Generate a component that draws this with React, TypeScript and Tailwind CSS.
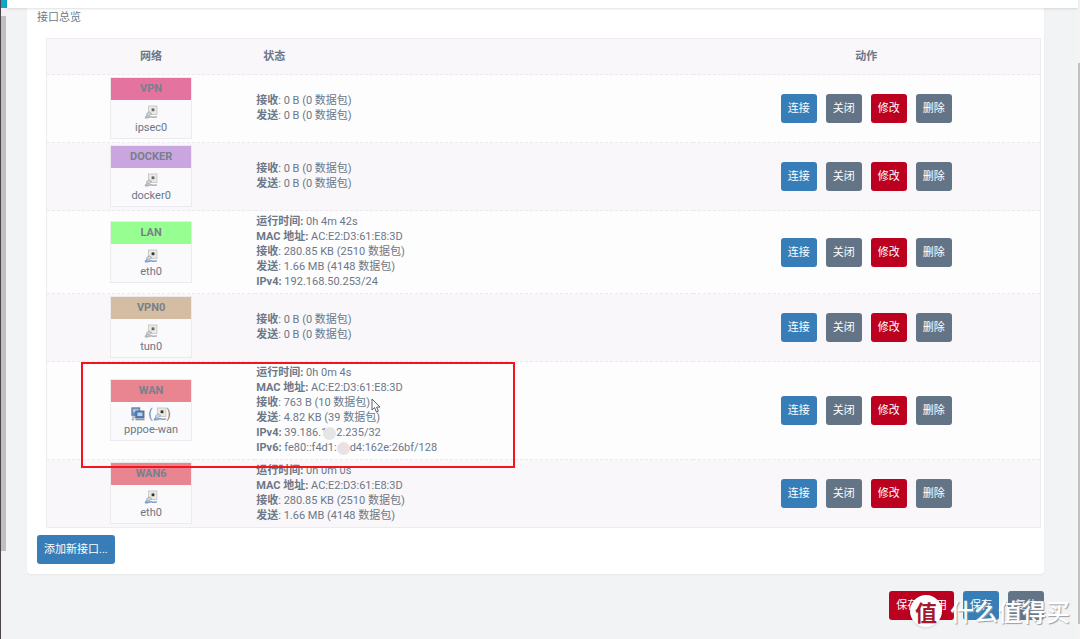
import type { ReactNode } from "react";

type Iface = {
  name: string;
  device: string;
  head: string;
  icon: "off" | "on" | "ppp";
  status: { label: string; plain?: boolean; value: ReactNode }[];
};

const mac = { label: "MAC 地址:", value: "AC:E2:D3:61:E8:3D" };
const traffic = (rx: string, tx: string) => [
  { label: "接收", plain: true, value: rx },
  { label: "发送", plain: true, value: tx },
];

function Blot({ tone }: { tone: string }) {
  return <span className={`relative -my-1 inline-block size-[13px] rounded-full align-middle ${tone}`} />;
}

const interfaces: Iface[] = [
  {
    name: "VPN", device: "ipsec0", head: "bg-[#e4749f]", icon: "off",
    status: traffic("0 B (0 数据包)", "0 B (0 数据包)"),
  },
  {
    name: "DOCKER", device: "docker0", head: "bg-[#c9a6e0]", icon: "off",
    status: traffic("0 B (0 数据包)", "0 B (0 数据包)"),
  },
  {
    name: "LAN", device: "eth0", head: "bg-[#97ff92]", icon: "on",
    status: [
      { label: "运行时间:", value: "0h 4m 42s" },
      mac,
      ...traffic("280.85 KB (2510 数据包)", "1.66 MB (4148 数据包)"),
      { label: "IPv4:", value: "192.168.50.253/24" },
    ],
  },
  {
    name: "VPN0", device: "tun0", head: "bg-[#d4bda2]", icon: "off",
    status: traffic("0 B (0 数据包)", "0 B (0 数据包)"),
  },
  {
    name: "WAN", device: "pppoe-wan", head: "bg-[#e88590]", icon: "ppp",
    status: [
      { label: "运行时间:", value: "0h 0m 4s" },
      mac,
      ...traffic("763 B (10 数据包)", "4.82 KB (39 数据包)"),
      { label: "IPv4:", value: <>39.186.1<span className="-ml-1"><Blot tone="bg-[#e5e5e7]" /></span>2.235/32</> },
      { label: "IPv6:", value: <>fe80::f4d1:<Blot tone="bg-[#ebe0e4]" />d4:162e:26bf/128</> },
    ],
  },
  {
    name: "WAN6", device: "eth0", head: "bg-[#e88590]", icon: "on",
    status: [
      { label: "运行时间:", value: "0h 0m 0s" },
      mac,
      ...traffic("280.85 KB (2510 数据包)", "1.66 MB (4148 数据包)"),
    ],
  },
];

function PortIcon({ active }: { active: boolean }) {
  const cable = active ? "#7f9fd0" : "#b2b2b6";
  return (
    <svg viewBox="0 0 14 14" className="inline-block size-[14px]" aria-hidden="true">
      <rect x="4.5" y="1" width="8.4" height="8.4" fill="#ebebe6" stroke="#c2c2be" strokeWidth="0.8" />
      <rect x="7.6" y="3.4" width="2.8" height="2.8" fill={active ? "#33352f" : "#66666a"} />
      <path d="M2.8 8.4 5.4 6.8 7.8 8.6 5.2 10.8 2.6 10.4Z" fill="#cdd3da" stroke="#9aa0a8" strokeWidth="0.7" />
      <path d="M1 12.8 3 10.8M1 12.7C4.5 13 6 11.2 8 11.9S11 12.2 12.8 11.8" fill="none" stroke={cable} strokeWidth="1.6" />
    </svg>
  );
}

function ComputersIcon() {
  return (
    <svg viewBox="0 0 14 14" className="inline-block size-[14px]" aria-hidden="true">
      <rect x="0.8" y="0.8" width="8" height="7.6" fill="#6e92c8" stroke="#76818f" strokeWidth="0.9" />
      <rect x="2.2" y="2.2" width="5" height="3" fill="#b6d0ee" />
      <path d="M1 9.2h3.4v2.4H1z" fill="#b4bcc6" />
      <rect x="4.8" y="4" width="8.2" height="7" fill="#4f7dbd" stroke="#5e6978" strokeWidth="0.9" />
      <rect x="6.4" y="5.6" width="5" height="3.4" fill="#b9d4f2" />
      <path d="M4.5 12.6h9" stroke="#8d97a4" strokeWidth="1.5" />
      <path d="M0.8 12.6h2" stroke="#6f9be0" strokeWidth="1.4" />
    </svg>
  );
}

const tones = {
  blue: "bg-[#377eb8]",
  slate: "bg-[#637487]",
  red: "bg-[#bc0020]",
};

function Button({ tone, children }: { tone: keyof typeof tones; children: ReactNode }) {
  return (
    <button
      type="button"
      className={`h-[29px] whitespace-nowrap rounded-[3px] px-[7px] pt-px text-[11px] leading-4 text-white ${tones[tone]}`}
    >
      {children}
    </button>
  );
}

function InterfaceRow({ item }: { item: Iface }) {
  return (
    <tr className="border-t border-dashed border-[#ebebee] odd:bg-[#fdfdfe] even:bg-[#f9f7fa]">
      <td className="px-0 pb-[3px] pt-0.5 text-center">
        <div className="mx-auto w-[82px] border border-[#ebeaee] bg-[#faf9fb]">
          <div className={`h-[22px] font-bold leading-[22px] text-[#77808c] ${item.head}`}>{item.name}</div>
          <div className="flex h-[38px] flex-col items-center justify-end pb-[3px]">
            <div className="flex h-4 items-center">
              {item.icon === "ppp" ? (
                <>
                  <ComputersIcon />
                  <span className="ml-[3px] text-[12px]">(</span>
                  <PortIcon active />
                  <span className="text-[12px]">)</span>
                </>
              ) : (
                <PortIcon active={item.icon === "on"} />
              )}
            </div>
            <div>{item.device}</div>
          </div>
        </div>
      </td>
      <td className="px-px pb-1 pt-[3px]">
        {item.status.map((line) => (
          <div key={line.label} className="whitespace-nowrap">
            <strong>{line.label}</strong>
            {line.plain && ":"} {line.value}
          </div>
        ))}
      </td>
      <td className="p-0">
        <div className="flex justify-center gap-[9px]">
          <Button tone="blue">连接</Button>
          <Button tone="slate">关闭</Button>
          <Button tone="red">修改</Button>
          <Button tone="slate">删除</Button>
        </div>
      </td>
    </tr>
  );
}

export default function App() {
  return (
    <div className="relative flex min-h-screen overflow-hidden bg-[#f2f3f5] font-[Roboto,'Noto_Sans_CJK_SC',sans-serif] text-[11px] leading-[15px] text-[#6c7787]">
      <div className="w-px bg-[#45464c]" />
      <div className="flex w-[6px] flex-col bg-[#f5f1f3]">
        <div className="h-2 bg-[#12a5c9]" />
        <div className="h-2" />
        <div className="mr-px h-[535px] bg-[#c2bebf]" />
      </div>

      <div className="min-w-0 flex-1">
        <header className="relative h-2 bg-white shadow-sm" />
        <main className="pl-5 pr-[34px]">
          <section className="rounded-b bg-white px-[10px] pb-[10px] shadow-xs">
            <h1 className="pb-3 pt-px text-[11px] leading-[17px]">接口总览</h1>
            <div className="-mr-[7px] ml-[9px]">
              <table className="w-full table-fixed border-collapse border border-[#ececf0]">
                <colgroup>
                  <col className="w-[21%]" />
                  <col className="w-[44%]" />
                  <col className="w-[35%]" />
                </colgroup>
                <thead>
                  <tr className="h-9 bg-[#f9f7fa]">
                    <th className="p-0">网络</th>
                    <th className="px-2 py-0 text-left">状态</th>
                    <th className="p-0">动作</th>
                  </tr>
                </thead>
                <tbody>
                  {interfaces.map((item) => (
                    <InterfaceRow key={item.name} item={item} />
                  ))}
                </tbody>
              </table>
            </div>
            <div className="pt-[7px]">
              <Button tone="blue">添加新接口...</Button>
            </div>
          </section>
          <div className="flex justify-end gap-[9px] py-[17px]">
            <Button tone="red">保存&amp;应用</Button>
            <Button tone="blue">保存</Button>
            <Button tone="slate">复位</Button>
          </div>
        </main>
      </div>

      <div className="flex w-[2px] flex-col bg-[#f5f3f4] pt-[63px]">
        <div className="h-[561px] bg-[#c2c0c1]" />
      </div>

      <div className="pointer-events-none absolute left-[81px] top-[362px] h-[106px] w-[434px] border-2 border-[#f5141c]" />
      <svg viewBox="0 0 10 15" className="pointer-events-none absolute left-[371px] top-[398px] h-[15px] w-[10px]" aria-hidden="true">
        <path d="M1 1v11l2.6-2.4L5.4 14l2-.9-1.8-4H9z" fill="#fff" stroke="#5c606a" strokeWidth="1" />
      </svg>
      <div className="pointer-events-none absolute bottom-3 right-[10px] flex items-center gap-2 text-white">
        <span className="flex size-8 items-center justify-center rounded-full bg-white font-['Noto_Sans_CJK_SC',sans-serif] text-[22px] font-bold leading-8 text-[#a6182c] shadow">
          值
        </span>
        <span className="font-['Noto_Sans_CJK_SC',sans-serif] text-[24px] font-medium leading-8 [text-shadow:1px_1px_1px_#9a9da3]">
          什么值得买
        </span>
      </div>
    </div>
  );
}
